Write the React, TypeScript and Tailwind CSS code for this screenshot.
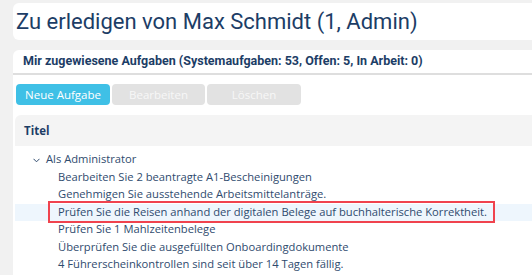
import React from "react";

const items = [
  "Bearbeiten Sie 2 beantragte A1-Bescheinigungen",
  "Genehmigen Sie ausstehende Arbeitsmittelanträge.",
  "Prüfen Sie die Reisen anhand der digitalen Belege auf buchhalterische Korrektheit.",
  "Prüfen Sie 1 Mahlzeitenbelege",
  "Überprüfen Sie die ausgefüllten Onboardingdokumente",
  "4 Führerscheinkontrollen sind seit über 14 Tagen fällig.",
];

export default function App() {
  return (
    <div className="bg-[#f1f1f1] h-[275px] w-[532px] overflow-hidden pl-[13px] pt-[3px]">
      <div className="bg-white rounded-l-[6px] h-[37px] flex items-center pl-[3px]">
        <span className="text-[#1c3d66] text-[22px] leading-none mt-[1px]" style={{ fontFamily: "Roboto, sans-serif" }}>
          Zu erledigen von Max Schmidt (1, Admin)
        </span>
      </div>
      <div className="mt-[10px] bg-white rounded-tl-[6px] h-[240px]">
        <div className="h-[25px] flex items-center pl-[10px] border-b-2 border-[#dedede]">
          <span className="text-[#1c3d66] text-[12.5px] font-bold" style={{ fontFamily: "Roboto, sans-serif" }}>
            Mir zugewiesene Aufgaben (Systemaufgaben: 53, Offen: 5, In Arbeit: 0)
          </span>
        </div>
        <div className="pt-[9px] pl-[3px] flex gap-[2px]" style={{ fontFamily: "'Open Sans', sans-serif" }}>
          <div className="w-[94px] h-[21px] rounded-[4px] bg-[#3fc0e6] text-white text-[11.5px] flex items-center justify-center">
            Neue Aufgabe
          </div>
          <div className="w-[93px] h-[21px] rounded-[4px] bg-[#e2e2e2] text-[#f7f7f7] text-[11.5px] flex items-center justify-center">
            Bearbeiten
          </div>
          <div className="w-[94px] h-[21px] rounded-[4px] bg-[#e2e2e2] text-[#f7f7f7] text-[11.5px] flex items-center justify-center">
            Löschen
          </div>
        </div>
        <div style={{ fontFamily: "'Open Sans', sans-serif" }}>
          <div className="mt-[10px] ml-[2px] bg-[#f4f4f4] rounded-tl-[6px] h-[31px] flex items-center pl-[9px]">
            <span className="text-[#1c3d66] text-[11.5px] font-bold">Titel</span>
          </div>
          <div className="pt-[5px] text-[11.2px] text-[#2f4b6e]">
            <div className="h-[17.5px] flex items-center pl-[20px] gap-[6px]">
              <svg width="7" height="5" viewBox="0 0 7 5" className="mt-[1px]">
                <path d="M0.5 0.8 L3.5 3.8 L6.5 0.8" fill="none" stroke="#2f4b6e" strokeWidth="1" />
              </svg>
              <span>Als Administrator</span>
            </div>
            {items.map((t, i) => (
              <div
                key={i}
                className={
                  i === 2
                    ? "relative h-[17.5px] flex items-center pl-[43px] ml-[2px] bg-[#eef6fd]"
                    : "h-[17.5px] flex items-center pl-[45px]"
                }
              >
                <span className="whitespace-nowrap">{t}</span>
                {i === 2 && (
                  <div className="absolute left-[33px] w-[447px] top-[-3px] bottom-[-2px] border-2 border-[#f0434e]" />
                )}
              </div>
            ))}
          </div>
        </div>
      </div>
    </div>
  );
}
